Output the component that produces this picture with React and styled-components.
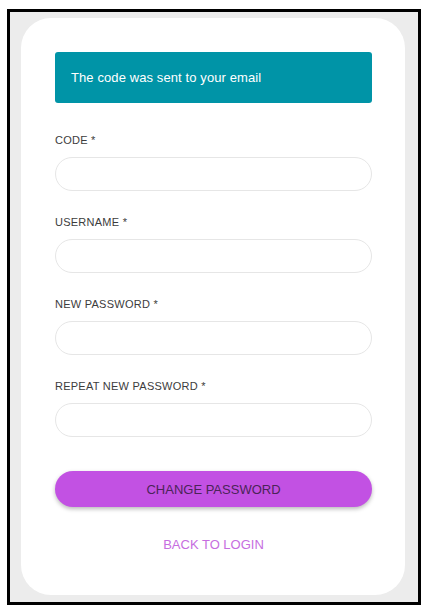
import React from 'react';
import styled, { createGlobalStyle } from 'styled-components';

const fields = ['CODE', 'USERNAME', 'NEW PASSWORD', 'REPEAT NEW PASSWORD'];

const ChangePassword = () => {
  return (
    <>
      <GlobalStyle />
      <Page>
        <Frame>
          <Card>
            <Notice>The code was sent to your email</Notice>
            <Form onSubmit={(e) => e.preventDefault()}>
              {fields.map((name) => (
                <Field key={name}>
                  <Label>{name} *</Label>
                  <Input type={name.includes('PASSWORD') ? 'password' : 'text'} />
                </Field>
              ))}
              <SubmitButton type="submit">CHANGE PASSWORD</SubmitButton>
            </Form>
            <BackLink href="#">BACK TO LOGIN</BackLink>
          </Card>
        </Frame>
      </Page>
    </>
  );
};

export default ChangePassword;

// Styled components
const GlobalStyle = createGlobalStyle`
  * {
    box-sizing: border-box;
  }

  body {
    margin: 0;
    background: #ffffff;
    font-family: "Liberation Sans", Arial, sans-serif;
  }
`;

const Page = styled.div`
  padding: 9px 6px 8px 7px;
`;

const Frame = styled.div`
  display: flex;
  height: 596px;
  padding: 6px 13px 7px 11px;
  background: #ececec;
  border: 3px solid #000;
`;

const Card = styled.div`
  flex: 1;
  display: flex;
  flex-direction: column;
  padding: 34px 33px 0 34px;
  background: #fff;
  border-radius: 30px;
`;

const Notice = styled.div`
  display: flex;
  align-items: center;
  height: 51px;
  padding: 0 16px;
  background: #0094a7;
  border-radius: 3px;
  color: #fff;
  font-size: 13px;
  letter-spacing: 0.1px;
`;

const Form = styled.form`
  display: flex;
  flex-direction: column;
  gap: 24px;
  margin-top: 30px;
`;

const Field = styled.div`
  display: flex;
  flex-direction: column;
  gap: 10px;
`;

const Label = styled.label`
  font-size: 11px;
  line-height: 14px;
  letter-spacing: 0.25px;
  color: #3c3c3c;
`;

const Input = styled.input`
  height: 34px;
  padding: 0 16px;
  border: 1px solid #e6e6e6;
  border-radius: 17px;
  background: #fff;
  font-family: inherit;
  font-size: 13px;

  &:focus {
    outline: none;
    border-color: #c9c9c9;
  }
`;

const SubmitButton = styled.button`
  height: 36px;
  margin-top: 10px;
  border: none;
  border-radius: 18px;
  background: #c251e3;
  box-shadow: 0 2px 4px rgba(0, 0, 0, 0.28);
  color: #4b2458;
  font-family: inherit;
  font-size: 13px;
  cursor: pointer;
`;

const BackLink = styled.a`
  align-self: center;
  margin-top: 30px;
  line-height: 16px;
  color: #c66de0;
  font-size: 13px;
  text-decoration: none;
`;
